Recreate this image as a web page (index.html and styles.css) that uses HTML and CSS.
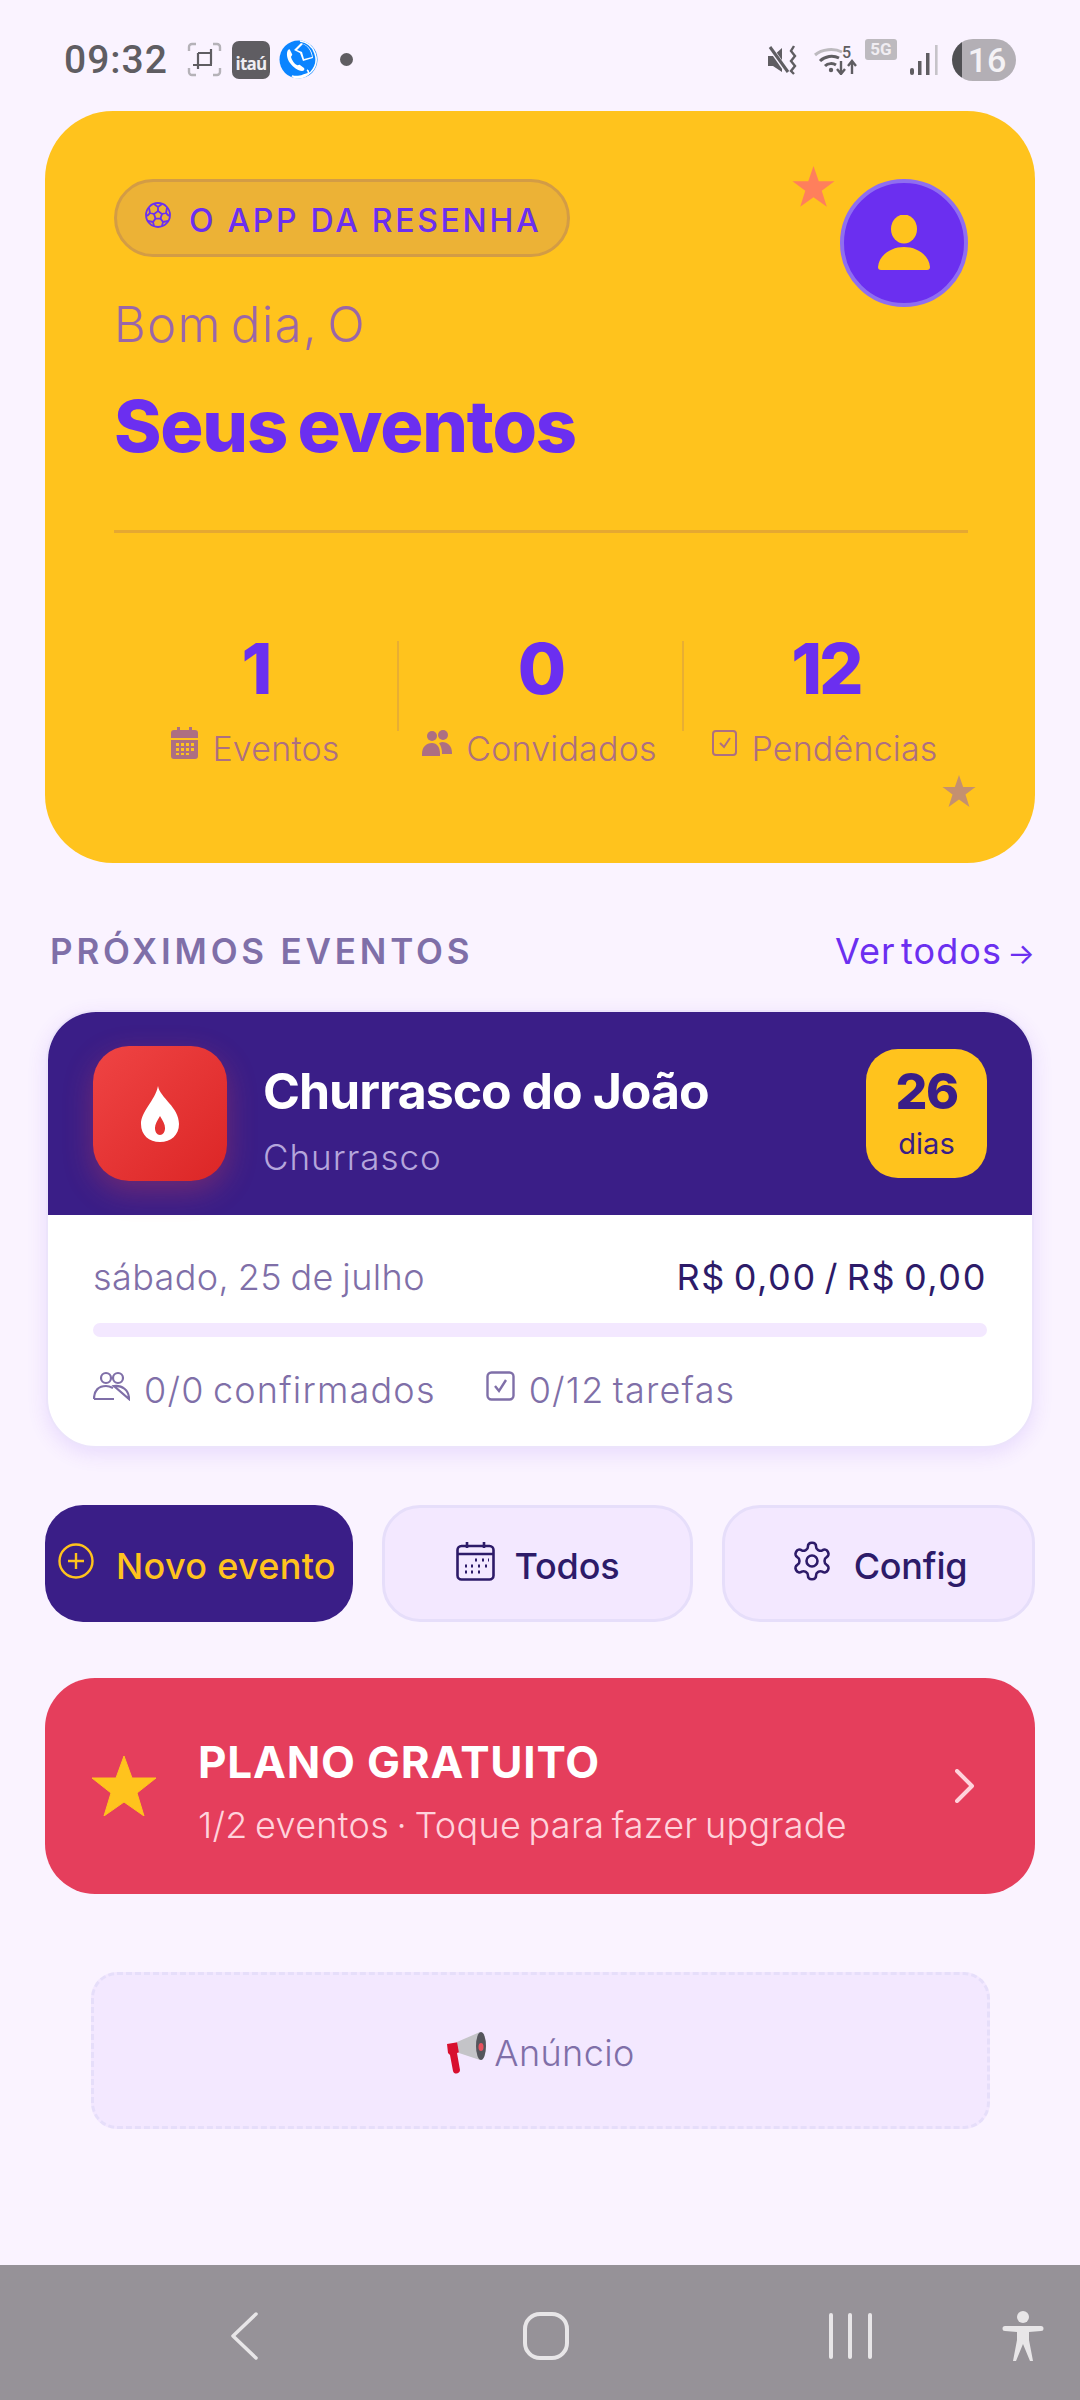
FILE: index.html
```html
<!DOCTYPE html>
<html lang="pt-BR">
<head>
  <meta charset="UTF-8" />
  <meta name="viewport" content="width=device-width, initial-scale=1.0" />
  <title>Seus eventos</title>
  <link rel="stylesheet" href="styles.css">
</head>
<body>
  <div class="screen">
    <div class="status-bar">
      <span class="time">09:32</span>
      <svg class="st-crop" viewBox="0 0 35 35" fill="none">
        <path d="M2 9V5a3 3 0 0 1 3-3h4M26 2h4a3 3 0 0 1 3 3v4M33 26v4a3 3 0 0 1-3 3h-4M9 33H5a3 3 0 0 1-3-3v-4" stroke="#b5b2b8" stroke-width="2.4"/>
        <path d="M11 11h13v11M6 23h19M11 11v12M24 7v3M11 24v3" stroke="#5f5d62" stroke-width="2.2"/>
      </svg>
      <span class="st-itau">itaú</span>
      <svg class="st-phone" viewBox="0 0 39 39">
        <circle cx="19.5" cy="19.5" r="19" fill="#0a84ff"/>
        <path d="M21 1a18.500 18.500 0 0 1 11 31c-4 4-9 6-13 6-3 0-5-1-6-2 3 1 9 1 12-1l3-1c2 0 2-3 0-4" fill="none" stroke="#fff" stroke-width="1.600"/>
        <path d="M22 3 L15 10 L21 13 L24 21 L34 18 C33 10 29 5 22 3Z" fill="#fff"/>
        <path d="M24 4 L18 10 L23 12 L25 19 L33 17 C32 11 29 6 24 4Z" fill="#0a84ff"/>
        <path d="M9 10c-2 3-1 9 2 13s8 8 12 8c2 0 3-2 2-3l-4-3c-1-1-2 1-3 0-3-1-5-5-6-8 0-1 2-2 1-3l-2-4c0-1-1-1-2 0z" fill="#fff"/>
      </svg>
      <span class="st-dot"></span>
      <span class="st-spacer"></span>
      <svg class="st-mute" viewBox="0 0 30 30">
        <path d="M0 11h5l9-8v24l-9-6H0z" fill="#5f5d62"/>
        <path d="M1 1l19 27" stroke="#f9f3ff" stroke-width="5"/>
        <path d="M2 2l18 25" stroke="#5f5d62" stroke-width="3"/>
        <path d="M26 1l-3 5 4 5-4 5 4 5-4 5 3 3" fill="none" stroke="#5f5d62" stroke-width="2.400"/>
      </svg>
      <svg class="st-wifi" viewBox="0 0 44 31">
        <path d="M1 11c7-6 19-7 27-3" fill="none" stroke="#bdbabf" stroke-width="3"/>
        <path d="M6 17c5-5 13-6 19-3" fill="none" stroke="#5f5d62" stroke-width="3"/>
        <path d="M11 22c3-3 8-3 11-1" fill="none" stroke="#5f5d62" stroke-width="3"/>
        <circle cx="17" cy="26" r="2.200" fill="#5f5d62"/>
        <text x="28" y="14" class="st-wifi-num">5</text>
        <path d="M27 17v12M23 25l4 5 4-5M38 30V18M34 22l4-5 4 5" fill="none" stroke="#5f5d62" stroke-width="2.400"/>
      </svg>
      <span class="st-5g">5G</span>
      <svg class="st-signal" viewBox="0 0 28 30">
        <rect x="0" y="23" width="4" height="7" rx="2" fill="#5f5d62"/>
        <rect x="8" y="16" width="3.500" height="14" fill="#5f5d62"/>
        <rect x="16" y="8" width="3.500" height="22" fill="#5f5d62"/>
        <rect x="25" y="0" width="2.600" height="30" fill="#c6c3c9"/>
      </svg>
      <span class="st-battery"><span class="st-battery-level">16</span></span>
    </div>

    <main class="content">
      <section class="hero">
        <svg class="hero-star star-coral" viewBox="0 0 24 24"><path d="M12 0l3 8.700h9l-7.300 5.400 2.900 9.200L12 17.800l-7.600 5.500 2.900-9.200L0 8.700h9z"/></svg>
        <svg class="hero-star star-muted" viewBox="0 0 24 24"><path d="M12 0l3 8.700h9l-7.300 5.400 2.900 9.200L12 17.800l-7.600 5.500 2.900-9.200L0 8.700h9z"/></svg>

        <div class="hero-top">
          <div>
            <div class="pill">
              <svg class="pill-ball" viewBox="0 0 26 26" fill="none" stroke="#6b2ff0" stroke-width="1.800">
                <circle cx="13" cy="13" r="12"/>
                <path d="M13 9l4 3-1.500 4.600h-5L9 12z"/>
                <path d="M13 9V5l-4-3M13 5l4-3M17 12l4-1 3 3M21 11l1-5M15.500 16.600l2.500 3.400-1 4M18 20l5-1M10.500 16.600L8 20l1 4M8 20l-5-1M9 12l-4-1-3 3M5 11L4 6"/>
              </svg>
              <span>O APP DA RESENHA</span>
            </div>
            <p class="greeting">Bom dia, O</p>
            <h1 class="hero-title">Seus eventos</h1>
          </div>
          <div class="avatar">
            <svg width="52" height="56" viewBox="0 0 52 56" fill="#ffc31d">
              <ellipse cx="26" cy="14" rx="13" ry="14.500"/>
              <path d="M0 52C1 40 13 32 26 32s25 8 26 20c0 2-1 3-3 3H3c-2 0-3-1-3-3z"/>
            </svg>
          </div>
        </div>

        <div class="hero-divider"></div>

        <div class="stats">
          <div class="stat-num">1</div>
          <div class="stat-num">0</div>
          <div class="stat-num">12</div>
          <div class="stat-label">
            <svg width="27" height="32" viewBox="0 0 27 32" fill="#ad6f82"><path d="M6 0h3v3h9V0h3v3h3a3 3 0 0 1 3 3v5H0V6a3 3 0 0 1 3-3h3zM0 13h27v16a3 3 0 0 1-3 3H3a3 3 0 0 1-3-3zm5 3v3h3v-3zm5 0v3h3v-3zm5 0v3h3v-3zm5 0v3h3v-3zM5 21v3h3v-3zm5 0v3h3v-3zm5 0v3h3v-3zm5 0v3h3v-3zM5 26v2h3v-2zm5 0v2h3v-2zm5 0v2h3v-2z" fill-rule="evenodd"/></svg>
            <span>Eventos</span>
          </div>
          <div class="stat-label">
            <svg width="30" height="26" viewBox="0 0 30 26" fill="#ad6f82"><circle cx="10" cy="6" r="5"/><circle cx="21" cy="5" r="5"/><path d="M0 24c0-7 4-11 10-11 5 0 8 4 8 11v2H0z"/><path d="M20 12c6 0 10 4 10 11v1H20c0-5-1-8-3-11z"/></svg>
            <span>Convidados</span>
          </div>
          <div class="stat-label">
            <svg width="25" height="26" viewBox="0 0 25 26" fill="none" stroke="#ad6f82" stroke-width="2"><rect x="1" y="1" width="23" height="24" rx="3"/><path d="M8 13l4 4 6-9"/></svg>
            <span>Pendências</span>
          </div>
        </div>
      </section>

      <div class="section-head">
        <h2 class="section-title">PRÓXIMOS EVENTOS</h2>
        <a class="see-all">Ver todos <span class="see-all-arrow">→</span></a>
      </div>

      <article class="event-card">
        <header class="event-head">
          <div class="event-icon">
            <svg width="40" height="56" viewBox="0 0 40 56">
              <path fill-rule="evenodd" fill="#fff" d="M18 0c2 12 21 21 21 38 0 11-8 18-19 18S1 49 1 38C1 25 15 15 18 0zm2 30c-3 5-5 8-5 12 0 4 2 7 5 7s5-3 5-7c0-4-2-7-5-12z"/>
            </svg>
          </div>
          <div class="event-text">
            <h3 class="event-name">Churrasco do João</h3>
            <p class="event-type">Churrasco</p>
          </div>
          <div class="event-days">
            <span class="event-days-num">26</span>
            <span class="event-days-label">dias</span>
          </div>
        </header>
        <div class="event-body">
          <div class="event-row">
            <span class="event-date">sábado, 25 de julho</span>
            <span class="event-money">R$ 0,00 / R$ 0,00</span>
          </div>
          <div class="progress"></div>
          <div class="event-meta">
            <span class="meta-item">
              <svg width="37" height="30" viewBox="0 0 37 30" fill="none" stroke="#7f6fa8" stroke-width="2.200"><circle cx="13" cy="7" r="5"/><circle cx="25" cy="7" r="5"/><path d="M1 28c0-9 5-13 12-13 3 0 5 1 7 2M21 15c8-1 15 4 15 13zM1 28h20"/></svg>
              0/0 confirmados
            </span>
            <span class="meta-item">
              <svg width="29" height="30" viewBox="0 0 29 30" fill="none" stroke="#7f6fa8" stroke-width="2.400"><rect x="1.500" y="1.500" width="26" height="27" rx="4"/><path d="M9 15l4 5 7-11"/></svg>
              0/12 tarefas
            </span>
          </div>
        </div>
      </article>

      <div class="actions">
        <button class="action action-primary">
          <svg width="36" height="36" viewBox="0 0 36 36" fill="none" stroke="#ffc31d" stroke-width="2.400"><circle cx="18" cy="18" r="16.500"/><path d="M18 10v16M10 18h16"/></svg>
          <span>Novo evento</span>
        </button>
        <button class="action">
          <svg width="39" height="40" viewBox="0 0 39 40" fill="none" stroke="#2d1b69" stroke-width="2.600"><rect x="1.500" y="5" width="36" height="33.500" rx="4"/><path d="M1.500 13h36M11 1v6M28 1v6"/><path d="M19 19h2M26 19h2M32 19h1M9 25h2M15 25h2M22 25h2M29 25h2M9 31h2M15 31h2M22 31h2" stroke-width="3"/></svg>
          <span>Todos</span>
        </button>
        <button class="action">
          <svg width="44" height="44" viewBox="0 0 24 24" fill="none" stroke="#2d1b69" stroke-width="1.400"><path d="M12.220 2h-.44a2 2 0 0 0-2 2v.18a2 2 0 0 1-1 1.730l-.43.25a2 2 0 0 1-2 0l-.15-.08a2 2 0 0 0-2.730.73l-.22.38a2 2 0 0 0 .73 2.730l.15.1a2 2 0 0 1 1 1.720v.51a2 2 0 0 1-1 1.740l-.15.09a2 2 0 0 0-.73 2.730l.22.38a2 2 0 0 0 2.730.73l.15-.08a2 2 0 0 1 2 0l.43.25a2 2 0 0 1 1 1.730V20a2 2 0 0 0 2 2h.44a2 2 0 0 0 2-2v-.18a2 2 0 0 1 1-1.730l.43-.25a2 2 0 0 1 2 0l.15.08a2 2 0 0 0 2.730-.73l.22-.39a2 2 0 0 0-.73-2.730l-.15-.08a2 2 0 0 1-1-1.740v-.5a2 2 0 0 1 1-1.740l.15-.09a2 2 0 0 0 .73-2.730l-.22-.38a2 2 0 0 0-2.730-.73l-.15.08a2 2 0 0 1-2 0l-.43-.25a2 2 0 0 1-1-1.730V4a2 2 0 0 0-2-2z"/><circle cx="12" cy="12" r="3"/></svg>
          <span>Config</span>
        </button>
      </div>

      <section class="plan">
        <svg class="plan-star" viewBox="0 0 64 60"><path d="M32 0l8 22h24l-19 15 7 23-20-14-20 14 7-23L0 22h24z" fill="#ffc31d" stroke="#ffc31d" stroke-linejoin="round"/></svg>
        <div class="plan-text">
          <h3 class="plan-title">PLANO GRATUITO</h3>
          <p class="plan-sub">1/2 eventos · Toque para fazer upgrade</p>
        </div>
        <svg class="plan-arrow" width="20" height="34" viewBox="0 0 20 34" fill="none" stroke="#ffd3dc" stroke-width="4" stroke-linecap="round" stroke-linejoin="round"><path d="M2 2l15 15L2 32"/></svg>
      </section>

      <div class="ad">
        <svg width="40" height="42" viewBox="0 0 40 42">
          <path d="M1 12l12-2 4 9-6 2 3 17c0 4-6 5-7 1L4 23 2 21z" fill="#d8102f"/>
          <path d="M11 10L34 0c4 6 4 20 0 28L13 21z" fill="#c4c4c8"/>
          <ellipse cx="35" cy="14" rx="5" ry="14" fill="#55555c"/>
          <ellipse cx="35" cy="15" rx="2.500" ry="4" fill="#e8505f"/>
        </svg>
        <span>Anúncio</span>
      </div>
    </main>

    <nav class="nav-bar">
      <svg class="nav-back" width="28" height="48" viewBox="0 0 28 48" fill="none" stroke="#e8e6e8" stroke-width="3.500" stroke-linecap="round" stroke-linejoin="round"><path d="M26 2L3 24l23 22"/></svg>
      <svg class="nav-home" width="46" height="48" viewBox="0 0 46 48" fill="none" stroke="#e8e6e8" stroke-width="4"><rect x="2" y="2" width="42" height="44" rx="15"/></svg>
      <svg class="nav-recents" width="43" height="46" viewBox="0 0 43 46" fill="#e8e6e8"><rect x="0" y="0" width="4" height="46" rx="2"/><rect x="19" y="0" width="4" height="46" rx="2"/><rect x="39" y="0" width="4" height="46" rx="2"/></svg>
      <svg class="nav-access" width="42" height="50" viewBox="0 0 42 50" fill="#e8e6e8"><circle cx="21" cy="6" r="6"/><path d="M3 15h36a2.500 2.500 0 0 1 0 5l-12 1v8l4 21h-3l-7-17-7 17h-3l4-21v-8L3 20a2.500 2.500 0 0 1 0-5z"/></svg>
    </nav>
  </div>
</body>
</html>
```

FILE: styles.css
```css
* {
  box-sizing: border-box;
}
body {
  margin: 0;
  font-family: Inter, "Noto Sans", sans-serif;
  background: #faf3ff;
  color: #2d1b69;
}
h1, h2, h3, p {
  margin: 0;
}
.screen {
  width: 1080px;
  height: 2400px;
  display: flex;
  flex-direction: column;
  overflow: hidden;
}

/* status bar */
.status-bar {
  height: 111px;
  flex: none;
  display: flex;
  align-items: center;
  padding: 8px 64px 0 64px;
  color: #5f5d62;
}
.time {
  font-family: Roboto, sans-serif;
  font-size: 39px;
  font-weight: 500;
  letter-spacing: 1px;
  width: 123px;
}
.st-crop {
  width: 35px;
  height: 35px;
}
.st-itau {
  width: 38px;
  height: 38px;
  margin-left: 10px;
  border-radius: 7px;
  background: #5f5d62;
  color: #f0edf2;
  font-family: "Open Sans", sans-serif;
  font-size: 17px;
  font-weight: 700;
  line-height: 46px;
  text-align: center;
  letter-spacing: -0.8px;
}
.st-phone {
  width: 39px;
  height: 39px;
  margin-left: 9px;
}
.st-dot {
  width: 13px;
  height: 13px;
  margin-left: 22px;
  border-radius: 50%;
  background: #5f5d62;
}
.st-spacer {
  flex: 1;
}
.st-mute {
  width: 30px;
  height: 30px;
}
.st-wifi {
  width: 44px;
  height: 31px;
  margin-left: 16px;
}
.st-wifi-num {
  font-family: Roboto, sans-serif;
  font-size: 16px;
  font-weight: 500;
  fill: #5f5d62;
}
.st-5g {
  width: 32px;
  height: 21px;
  margin: -20px 0 0 7px;
  border-radius: 3px;
  background: #bdbabf;
  color: #f0edf2;
  font-family: Roboto, sans-serif;
  font-size: 17px;
  font-weight: 700;
  line-height: 21px;
  text-align: center;
}
.st-signal {
  width: 28px;
  height: 30px;
  margin-left: 13px;
}
.st-battery {
  width: 64px;
  height: 42px;
  margin-left: 14px;
  border-radius: 21px;
  background: linear-gradient(90deg, #505054 0 10px, #b3afb5 10px);
  color: #f4f2f5;
  text-align: center;
}
.st-battery-level {
  display: block;
  padding-left: 6px;
  font-family: Roboto, sans-serif;
  font-size: 34px;
  font-weight: 500;
  line-height: 42px;
}

.content {
  flex: 1;
  padding: 0 45px;
}

/* yellow hero */
.hero {
  position: relative;
  height: 752px;
  padding: 68px 67px 0 69px;
  border-radius: 68px;
  background: #ffc31d;
  color: #6b2ff0;
}
.hero-star {
  position: absolute;
}
.hero-star path {
  fill: currentColor;
}
.star-coral {
  left: 747px;
  top: 55px;
  width: 43px;
  height: 42px;
  color: #ff7f5c;
}
.star-muted {
  left: 897px;
  top: 664px;
  width: 34px;
  height: 33px;
  color: #c49070;
}
.hero-top {
  display: flex;
  justify-content: space-between;
  align-items: flex-start;
}
.pill {
  display: inline-flex;
  align-items: center;
  height: 78px;
  width: 456px;
  padding: 4px 0 0 28px;
  border: 3px solid #d39c45;
  border-radius: 39px;
  background: #ecb236;
  font-size: 32px;
  font-weight: 500;
  letter-spacing: 2.7px;
}
.pill-ball {
  width: 26px;
  height: 26px;
  margin: -10px 18px 0 0;
}
.greeting {
  margin-top: 38px;
  font-size: 49px;
  font-weight: 300;
  line-height: 60px;
  letter-spacing: 1.4px;
  word-spacing: -6px;
  color: #9a66a8;
}
.hero-title {
  margin-top: 31px;
  font-size: 72px;
  font-weight: 800;
  line-height: 80px;
  letter-spacing: -1.2px;
  word-spacing: -4px;
}
.avatar {
  width: 128px;
  height: 128px;
  display: flex;
  align-items: center;
  justify-content: center;
  border: 4px solid #8f6ef0;
  border-radius: 50%;
  background: #6b2ff0;
}
.hero-divider {
  height: 3px;
  margin-top: 64px;
  background: #e5a832;
}
.stats {
  display: grid;
  grid-template-columns: 283px 285px 1fr;
  margin-top: 108px;
}
.stat-num {
  height: 90px;
  font-size: 70px;
  font-weight: 800;
  line-height: 56px;
  letter-spacing: -3px;
  text-align: center;
}
.stat-num + .stat-num {
  border-left: 2px solid #e8ae33;
}
.stat-label {
  display: flex;
  align-items: center;
  justify-content: center;
  gap: 14px;
  padding-top: 2px;
  font-size: 34px;
  font-weight: 300;
  line-height: 32px;
  letter-spacing: 0.2px;
  color: #ad6f82;
}
.stat-label svg {
  margin-top: -12px;
}

/* section heading */
.section-head {
  display: flex;
  justify-content: space-between;
  align-items: center;
  height: 44px;
  margin-top: 66px;
  padding: 0 0 0 5px;
}
.section-title {
  font-size: 35px;
  font-weight: 600;
  letter-spacing: 3.8px;
  color: #7f6fa8;
}
.see-all {
  font-size: 36px;
  font-weight: 400;
  letter-spacing: 1.1px;
  word-spacing: -6px;
  color: #6b2ff0;
}
.see-all-arrow {
  font-size: 29px;
  letter-spacing: 0;
}

/* event card */
.event-card {
  height: 438px;
  margin: 37px 1px 0;
  border: 2px solid #ece4fb;
  border-radius: 50px;
  background: #fff;
  overflow: hidden;
  box-shadow: 0 6px 20px rgba(107, 47, 240, 0.12);
}
.event-head {
  height: 203px;
  display: flex;
  align-items: center;
  padding: 0 45px;
  background: #3a1e87;
}
.event-icon {
  width: 134px;
  height: 135px;
  flex: none;
  display: flex;
  align-items: center;
  justify-content: center;
  border-radius: 36px;
  background: linear-gradient(135deg, #ef4444, #dc2626);
  box-shadow: 0 10px 30px rgba(239, 68, 68, 0.3);
}
.event-text {
  flex: 1;
  margin: 13px 0 0 36px;
}
.event-name {
  font-size: 50px;
  font-weight: 700;
  line-height: 60px;
  letter-spacing: -1px;
  color: #fff;
}
.event-type {
  margin-top: 14px;
  font-size: 35px;
  font-weight: 300;
  line-height: 44px;
  letter-spacing: 1px;
  color: #b5a6dc;
}
.event-days {
  width: 121px;
  height: 129px;
  display: flex;
  flex-direction: column;
  align-items: center;
  justify-content: center;
  border-radius: 32px;
  background: #ffc31d;
  color: #3a1e87;
}
.event-days-num {
  margin-top: -5px;
  font-size: 50px;
  font-weight: 800;
  line-height: 60px;
  letter-spacing: -1.4px;
}
.event-days-label {
  margin-top: 5px;
  font-size: 29px;
  line-height: 36px;
}
.event-body {
  padding: 40px 45px 0;
}
.event-row {
  display: flex;
  justify-content: space-between;
  line-height: 44px;
}
.event-date {
  font-size: 36px;
  font-weight: 300;
  letter-spacing: 0.4px;
  word-spacing: -2px;
  color: #7f6fa8;
}
.event-money {
  font-size: 36px;
  font-weight: 400;
  letter-spacing: 1.6px;
  word-spacing: -4px;
}
.progress {
  height: 14px;
  margin-top: 24px;
  border-radius: 7px;
  background: #f3e8ff;
}
.event-meta {
  display: flex;
  gap: 50px;
  margin-top: 31px;
  font-size: 36px;
  font-weight: 300;
  line-height: 44px;
  letter-spacing: 1.2px;
  word-spacing: -3px;
  color: #7f6fa8;
}
.meta-item {
  display: flex;
  align-items: center;
  gap: 14px;
}
.meta-item svg {
  margin-top: -8px;
}

/* action buttons */
.actions {
  display: grid;
  grid-template-columns: 308px 311px 313px;
  gap: 29px;
  height: 117px;
  margin-top: 57px;
}
.action {
  display: flex;
  align-items: center;
  justify-content: center;
  gap: 20px;
  padding: 5px 0 0;
  border: 3px solid #e6defa;
  border-radius: 38px;
  background: #f3e8ff;
  color: #2d1b69;
  font-family: inherit;
  font-size: 36px;
  font-weight: 500;
  letter-spacing: -0.2px;
}
.action svg {
  margin-top: -11px;
  flex: none;
}
.action-primary {
  border: 0;
  gap: 22px;
  padding-right: 4px;
  background: #3a1e87;
  color: #ffc31d;
  letter-spacing: 0.3px;
}

/* plan banner */
.plan {
  display: flex;
  align-items: center;
  height: 216px;
  margin-top: 56px;
  padding: 0 60px 0 47px;
  border-radius: 50px;
  background: #e53e5c;
}
.plan-star {
  width: 64px;
  height: 60px;
  flex: none;
}
.plan-text {
  flex: 1;
  margin: 10px 0 0 42px;
}
.plan-title {
  font-size: 44px;
  font-weight: 700;
  line-height: 52px;
  letter-spacing: 0.8px;
  color: #fff;
}
.plan-sub {
  margin-top: 15px;
  font-size: 36px;
  font-weight: 300;
  line-height: 44px;
  letter-spacing: 0.3px;
  word-spacing: -3px;
  color: #ffd3dc;
}

/* ad slot */
.ad {
  display: flex;
  align-items: center;
  justify-content: center;
  gap: 8px;
  height: 157px;
  margin: 78px 45px 0 46px;
  padding-top: 4px;
  border: 3px dashed #e6defa;
  border-radius: 26px;
  background: #f3e8ff;
  font-size: 36px;
  font-weight: 300;
  letter-spacing: 0.4px;
  color: #7f6fa8;
}

/* navigation bar */
.nav-bar {
  height: 135px;
  flex: none;
  display: flex;
  align-items: center;
  padding: 6px 0 0 230px;
  background: #969298;
}
.nav-home {
  margin-left: 265px;
}
.nav-recents {
  margin-left: 260px;
}
.nav-access {
  margin-left: 130px;
}
```
